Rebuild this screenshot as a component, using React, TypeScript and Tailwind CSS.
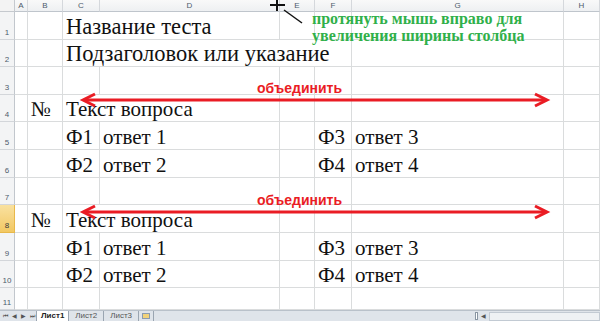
import React from "react";

type Cell = { span?: number; text?: string; title?: boolean };

const cols = ["A", "B", "C", "D", "E", "F", "G", "H"];

const empty = (): Cell[] => cols.map(() => ({}));

const question: Cell[] = [
    {},
    { text: "№" },
    { span: 2, text: "Текст вопроса" },
    {},
    {},
    {},
    {},
];

const answers = (a: string, b: string, c: string, d: string): Cell[] => [
    {},
    {},
    { text: a },
    { text: b },
    {},
    { text: c },
    { text: d },
    {},
];

const rows: { n: number; cells: Cell[]; selected?: boolean }[] = [
    { n: 1, cells: [{}, {}, { span: 2, text: "Название теста", title: true }, {}, {}, {}, {}] },
    { n: 2, cells: [{}, {}, { span: 4, text: "Подзаголовок или указание", title: true }, {}, {}] },
    { n: 3, cells: empty() },
    { n: 4, cells: question },
    { n: 5, cells: answers("Ф1", "ответ 1", "Ф3", "ответ 3") },
    { n: 6, cells: answers("Ф2", "ответ 2", "Ф4", "ответ 4") },
    { n: 7, cells: empty() },
    { n: 8, cells: question, selected: true },
    { n: 9, cells: answers("Ф1", "ответ 1", "Ф3", "ответ 3") },
    { n: 10, cells: answers("Ф2", "ответ 2", "Ф4", "ответ 4") },
    { n: 11, cells: empty() },
];

const serif = { fontFamily: '"Liberation Serif", "Times New Roman", serif' };

function RedArrow({ top }: { top: number }) {
    return (
        <svg
            className="absolute left-[78px] pointer-events-none"
            style={{ top }}
            width="474"
            height="16"
            viewBox="0 0 474 16"
        >
            <line x1="6" y1="8" x2="468" y2="8" stroke="#ea1c24" strokeWidth="3" />
            <polyline points="17,2 5,8 17,14" fill="none" stroke="#ea1c24" strokeWidth="3" strokeLinejoin="miter" />
            <polyline points="457,2 469,8 457,14" fill="none" stroke="#ea1c24" strokeWidth="3" strokeLinejoin="miter" />
        </svg>
    );
}

function MergeLabel({ top }: { top: number }) {
    return (
        <span
            className="absolute left-[257px] text-[14px] leading-none font-bold text-[#ea1c24] whitespace-nowrap"
            style={{ top, fontFamily: '"Liberation Sans", Arial, sans-serif' }}
        >
            объединить
        </span>
    );
}

export default function App() {
    return (
        <div className="relative w-[600px] h-[321px] overflow-hidden bg-white select-none">
            <div
                className="grid grid-cols-[15px_13px_35px_37px_180px_35px_37px_212px_36px] grid-rows-[12px_28px_27px_28px_27px_28px_28px_27px_28px_28px_27px_22px]"
                style={{ fontFamily: '"Liberation Sans", Arial, sans-serif' }}
            >
                <div className="bg-[#f3f3f3] border-r border-b border-[#c5c9ce]" />
                {cols.map((c) => (
                    <div
                        key={c}
                        className="flex items-center justify-center bg-gradient-to-b from-[#f9f9f9] to-[#eef0f2] border-r border-b border-[#d5d8dc] border-b-[#bfc5cc] text-[8px] text-[#4d5b6b] leading-none"
                    >
                        {c}
                    </div>
                ))}

                {rows.map((row) => (
                    <React.Fragment key={row.n}>
                        <div
                            className={`flex items-end justify-center pb-[2px] text-[8px] leading-none border-r border-b ${
                                row.selected
                                    ? "bg-gradient-to-b from-[#f9e19f] to-[#f2c862] border-[#e8b84a] text-[#3b3b3b]"
                                    : "bg-[#f3f4f5] border-[#d3d6da] border-r-[#c2c7cd] text-[#4d5b6b]"
                            }`}
                        >
                            {row.n}
                        </div>
                        {row.cells.map((cell, i) => (
                            <div
                                key={i}
                                className={`flex items-end overflow-visible border-r border-b border-[#dadcdd] pl-[3px] pb-[1px] ${
                                    cell.span === 4 ? "col-span-4" : cell.span === 2 ? "col-span-2" : ""
                                }`}
                            >
                                {cell.text && (
                                    <span
                                        className={`leading-none text-[#111] whitespace-nowrap ${
                                            cell.title ? "text-[22.5px]" : "text-[21px]"
                                        }`}
                                        style={serif}
                                    >
                                        {cell.text}
                                    </span>
                                )}
                            </div>
                        ))}
                    </React.Fragment>
                ))}
            </div>

            <div
                className="flex items-center h-[11px] bg-[#dfe4ea] border-t border-[#b9c1ca] text-[8px] leading-none text-[#444]"
                style={{ fontFamily: '"Liberation Sans", Arial, sans-serif' }}
            >
                <div className="flex items-center gap-[4px] pl-[3px] w-[36px] text-[6px] text-[#555]">
                    <span>⏮</span>
                    <span>◀</span>
                    <span>▶</span>
                    <span>⏭</span>
                </div>
                <div className="flex items-end h-full">
                    <div className="h-full px-[4px] bg-white border-x border-[#9aa5b1] font-bold text-[#222] flex items-center">
                        Лист1
                    </div>
                    <div className="h-full px-[6px] border-r border-[#9aa5b1] flex items-center text-[#555]">Лист2</div>
                    <div className="h-full px-[6px] border-r border-[#9aa5b1] flex items-center text-[#555]">Лист3</div>
                    <div className="h-full px-[3px] border-r border-[#9aa5b1] flex items-center">
                        <span className="block w-[8px] h-[6px] bg-[#f1d27a] border border-[#8a9bb0]" />
                    </div>
                </div>
                <div className="flex-1" />
                <div className="flex items-center h-full w-[125px]">
                    <span className="w-[3px] h-[8px] border border-[#8a96a3] bg-white" />
                    <span className="ml-[3px] text-[6px] text-[#555]">◀</span>
                    <span className="ml-[3px] flex-1 h-[9px] bg-[#eef1f4] border border-[#c2cad3]" />
                </div>
            </div>

            <span
                className="absolute left-[312px] top-[10px] text-[16px] leading-[17px] font-bold text-[#30b04a] whitespace-nowrap"
                style={serif}
            >
                протянуть мышь вправо для
                <br />
                увеличения ширины столбца
            </span>

            <svg className="absolute left-[268px] top-0 pointer-events-none" width="40" height="26" viewBox="0 0 40 26">
                <line x1="2" y1="5" x2="17" y2="5" stroke="#111" strokeWidth="2" />
                <line x1="9" y1="0" x2="9" y2="11" stroke="#111" strokeWidth="2" />
                <line x1="16" y1="10" x2="34" y2="23" stroke="#111" strokeWidth="1.5" />
            </svg>

            <MergeLabel top={81} />
            <RedArrow top={92} />
            <MergeLabel top={193} />
            <RedArrow top={204} />
        </div>
    );
}
